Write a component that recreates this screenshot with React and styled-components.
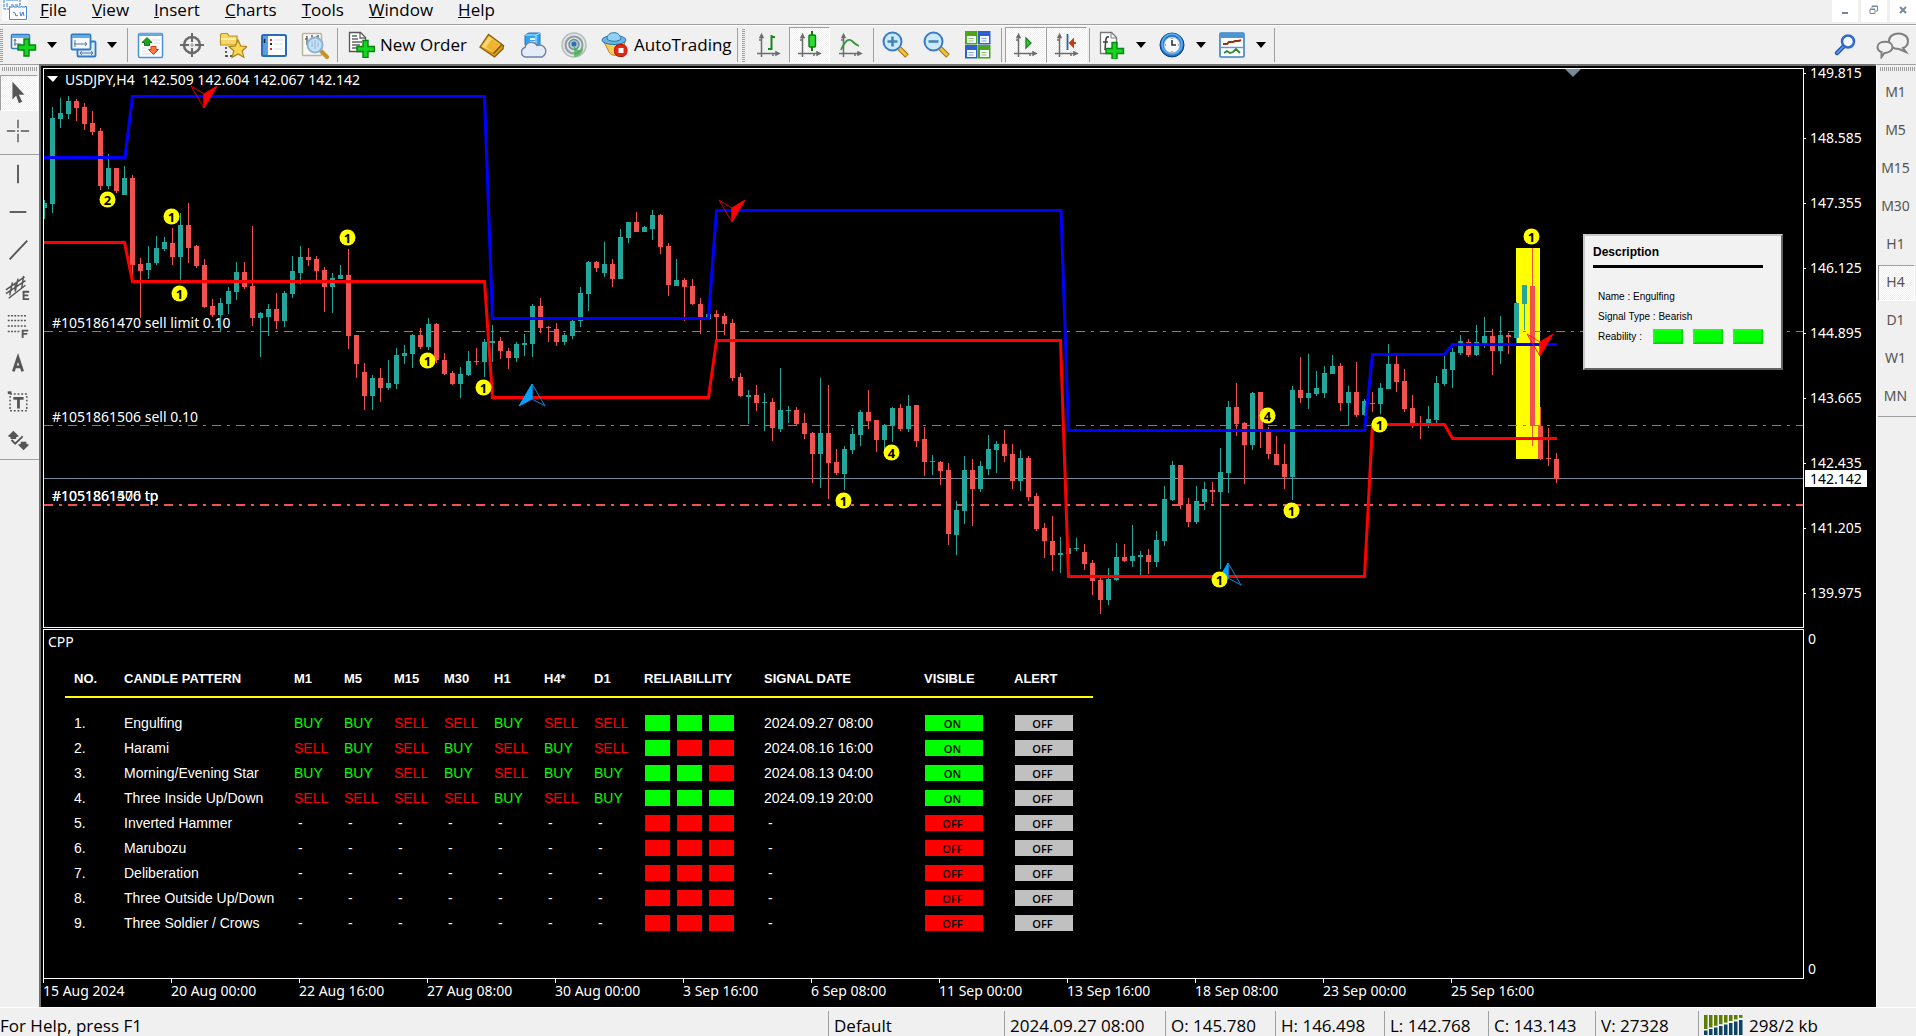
import React from 'react';
import styled, { createGlobalStyle } from 'styled-components';

const colors = {
  face: '#f0f0f0',
  line: '#a0a0a0',
  up: '#26a69a',
  down: '#ef5350',
  green: '#00ff00',
  red: '#ff0000',
  blue: '#0000ff',
  yellow: '#ffff00',
  slate: '#778899',
};

const uiFont = '"Open Sans", "Noto Sans", sans-serif';
const chartFont = '"Noto Sans", "Open Sans", sans-serif';
const tableFont = '"Liberation Sans", Arial, sans-serif';

const GlobalStyle = createGlobalStyle`
  * {
    box-sizing: border-box;
  }

  body {
    margin: 0;
    background: ${colors.face};
    font-family: ${uiFont};
    font-size: 17px;
    color: #000;
  }

  button {
    margin: 0;
    padding: 0;
    border: 0;
    background: none;
    color: inherit;
    font: inherit;
  }
`;

/* ---------- data ---------- */

const menus = ['File', 'View', 'Insert', 'Charts', 'Tools', 'Window', 'Help'];

const timeframes = ['M1', 'M5', 'M15', 'M30', 'H1', 'H4', 'D1', 'W1', 'MN'];

const prices = ['149.815', '148.585', '147.355', '146.125', '144.895', '143.665', '142.435', '141.205', '139.975'];

const times = [
  '15 Aug 2024', '20 Aug 00:00', '22 Aug 16:00', '27 Aug 08:00', '30 Aug 00:00', '3 Sep 16:00',
  '6 Sep 08:00', '11 Sep 00:00', '13 Sep 16:00', '18 Sep 08:00', '23 Sep 00:00', '25 Sep 16:00',
];

const frames = ['M1', 'M5', 'M15', 'M30', 'H1', 'H4*', 'D1'];

// signals: B = buy, S = sell. score: how many of the three blocks are green
const patterns = [
  { name: 'Engulfing', signals: 'BBSSBSS', score: 3, date: '2024.09.27 08:00' },
  { name: 'Harami', signals: 'SBSBSBS', score: 1, date: '2024.08.16 16:00' },
  { name: 'Morning/Evening Star', signals: 'BBSBSBB', score: 2, date: '2024.08.13 04:00' },
  { name: 'Three Inside Up/Down', signals: 'SSSSBSB', score: 3, date: '2024.09.19 20:00' },
  { name: 'Inverted Hammer', signals: '-------', score: 0 },
  { name: 'Marubozu', signals: '-------', score: 0 },
  { name: 'Deliberation', signals: '-------', score: 0 },
  { name: 'Three Outside Up/Down', signals: '-------', score: 0 },
  { name: 'Three Soldier / Crows', signals: '-------', score: 0 },
];

// [rising, high, body top, body bottom, low], one every 8px
const candles = [
  [1, 200, 203, 208, 219], [1, 107, 118, 204, 213], [1, 98, 113, 119, 128], [1, 96, 101, 114, 119],
  [0, 99, 101, 108, 121], [0, 103, 107, 124, 130], [0, 111, 123, 132, 135], [0, 128, 131, 186, 190],
  [1, 154, 168, 186, 189], [0, 168, 168, 191, 193], [1, 166, 178, 195, 195], [0, 175, 178, 265, 280],
  [0, 258, 264, 271, 318], [1, 246, 263, 270, 279], [1, 236, 248, 263, 265], [1, 237, 242, 249, 251],
  [0, 228, 243, 257, 265], [1, 213, 225, 257, 280], [0, 203, 225, 248, 263], [0, 245, 246, 266, 268],
  [0, 259, 265, 307, 308], [0, 299, 306, 315, 317], [1, 298, 303, 315, 331], [1, 287, 291, 304, 314],
  [1, 262, 272, 292, 300], [0, 262, 272, 287, 289], [0, 226, 286, 318, 326], [1, 312, 313, 318, 357],
  [1, 304, 309, 317, 336], [0, 293, 309, 321, 329], [1, 291, 293, 321, 327], [1, 256, 271, 294, 298],
  [1, 246, 257, 273, 284], [0, 248, 257, 260, 266], [0, 256, 259, 271, 282], [0, 267, 270, 287, 312],
  [1, 273, 278, 287, 313], [1, 265, 275, 279, 279], [0, 249, 275, 336, 349], [0, 335, 335, 364, 378],
  [0, 363, 372, 396, 410], [1, 375, 378, 396, 410], [0, 368, 378, 388, 402], [1, 360, 383, 388, 390],
  [1, 348, 355, 384, 389], [1, 345, 353, 356, 364], [1, 334, 335, 354, 368], [0, 328, 335, 347, 349],
  [1, 318, 324, 347, 350], [0, 323, 324, 360, 363], [0, 353, 360, 374, 375], [0, 371, 373, 384, 385],
  [1, 367, 374, 384, 398], [1, 351, 361, 375, 376], [0, 348, 361, 362, 365], [1, 339, 342, 362, 377],
  [1, 325, 341, 343, 362], [0, 337, 341, 351, 359], [0, 348, 351, 358, 369], [1, 342, 344, 358, 362],
  [1, 334, 343, 345, 356], [1, 304, 306, 344, 357], [0, 298, 306, 328, 333], [0, 326, 327, 328, 342],
  [0, 323, 329, 342, 346], [1, 333, 335, 342, 345], [1, 320, 321, 336, 339], [1, 287, 293, 321, 327],
  [1, 261, 262, 294, 311], [0, 261, 262, 268, 272], [1, 242, 264, 273, 277], [0, 259, 264, 279, 287],
  [1, 229, 237, 279, 279], [1, 222, 222, 238, 243], [0, 212, 222, 232, 232], [1, 226, 227, 232, 232],
  [1, 210, 215, 229, 240], [0, 214, 215, 247, 254], [0, 243, 246, 285, 296], [1, 259, 280, 286, 286],
  [0, 278, 280, 287, 321], [0, 279, 286, 304, 305], [0, 298, 304, 318, 334], [1, 314, 314, 319, 319],
  [0, 310, 314, 317, 340], [0, 313, 316, 324, 335], [0, 319, 323, 378, 381], [0, 373, 377, 396, 397],
  [1, 390, 395, 397, 424], [0, 385, 395, 403, 411], [1, 393, 402, 403, 431], [0, 398, 402, 428, 441],
  [1, 368, 410, 429, 432], [1, 406, 410, 411, 423], [0, 407, 410, 424, 425], [0, 413, 423, 434, 439],
  [0, 432, 433, 454, 483], [1, 378, 433, 454, 488], [0, 385, 433, 463, 499], [0, 449, 462, 473, 475],
  [1, 446, 449, 474, 490], [1, 428, 434, 450, 454], [1, 410, 412, 435, 446], [0, 390, 412, 421, 429],
  [0, 420, 420, 440, 452], [1, 424, 425, 440, 450], [1, 407, 408, 426, 442], [0, 404, 408, 429, 431],
  [1, 395, 406, 429, 432], [0, 405, 405, 441, 447], [0, 427, 439, 462, 476], [1, 455, 461, 462, 475],
  [0, 461, 462, 471, 485], [0, 463, 470, 534, 545], [1, 501, 510, 535, 555], [1, 456, 470, 511, 524],
  [0, 459, 470, 489, 526], [1, 461, 466, 489, 492], [1, 435, 449, 469, 475], [1, 441, 444, 450, 473],
  [0, 430, 444, 456, 462], [0, 444, 454, 481, 489], [1, 450, 458, 481, 491], [0, 456, 458, 497, 501],
  [0, 493, 496, 529, 531], [0, 523, 528, 541, 558], [0, 516, 541, 555, 571], [1, 537, 553, 555, 573],
  [1, 548, 548, 554, 554], [1, 538, 548, 549, 551], [0, 544, 552, 564, 570], [0, 560, 563, 581, 595],
  [0, 578, 580, 600, 614], [1, 568, 579, 600, 605], [1, 543, 557, 580, 581], [0, 544, 557, 561, 562],
  [1, 525, 556, 561, 567], [1, 551, 555, 557, 576], [0, 549, 555, 562, 574], [1, 531, 540, 562, 567],
  [1, 486, 499, 541, 546], [1, 461, 465, 500, 501], [0, 465, 465, 505, 509], [0, 498, 504, 522, 527],
  [1, 486, 501, 522, 524], [1, 482, 489, 502, 510], [0, 482, 490, 492, 503], [1, 448, 472, 492, 569],
  [1, 401, 407, 473, 493], [0, 383, 407, 424, 436], [0, 422, 423, 445, 484], [1, 392, 393, 445, 450],
  [0, 392, 392, 430, 448], [0, 427, 430, 454, 459], [0, 436, 454, 465, 465], [0, 444, 464, 477, 489],
  [1, 386, 390, 477, 500], [0, 357, 390, 398, 403], [1, 354, 393, 398, 409], [1, 371, 388, 394, 396],
  [1, 366, 373, 393, 398], [1, 355, 366, 374, 374], [0, 363, 366, 403, 411], [1, 386, 392, 403, 426],
  [0, 362, 392, 415, 417], [1, 399, 401, 415, 416], [0, 392, 403, 404, 412], [1, 383, 388, 404, 414],
  [1, 344, 364, 389, 389], [0, 356, 364, 382, 392], [0, 369, 381, 409, 412], [0, 395, 408, 424, 428],
  [0, 416, 424, 425, 439], [1, 406, 419, 424, 428], [1, 376, 383, 420, 424], [1, 355, 369, 384, 386],
  [1, 348, 352, 370, 388], [1, 335, 341, 353, 355], [0, 339, 342, 355, 357], [1, 325, 342, 355, 356],
  [1, 317, 336, 344, 348], [0, 329, 336, 351, 375], [1, 316, 335, 351, 364], [0, 333, 335, 337, 354],
  [1, 302, 303, 338, 343], [1, 285, 285, 304, 330], [0, 248, 286, 426, 446], [0, 407, 426, 459, 460],
  [0, 428, 458, 459, 466], [0, 453, 459, 479, 483],
];

const upperBand = '44,157.5 125,157.5 132.5,96.5 484.5,96.5 492.5,318.5 708.5,318.5 716.5,210.5 1061,210.5 1068.5,430.5 1364.5,430.5 1372.5,354.5 1444.5,354.5 1452.5,344.5 1557,344.5';
const lowerBand = '44,242.5 124.5,242.5 132.5,281.5 484.5,281.5 492.5,397.5 708.5,397.5 716.5,340.5 1060.5,340.5 1068.5,576.5 1364.5,576.5 1372.5,424.5 1444.5,424.5 1452.5,438.5 1557,438.5';

const markers = [
  [107.5, 199.5, 2], [171.5, 216.5, 1], [179.5, 293.5, 1], [347.5, 237.5, 1], [427.5, 360.5, 1],
  [483.5, 387.5, 1], [843.5, 500.5, 1], [891.5, 452.5, 4], [1219.5, 579.5, 1], [1291.5, 510.5, 1],
  [1267.5, 415.5, 4], [1379.5, 424.5, 1], [1531.5, 236.5, 1],
];

const status = [
  ['Default', 176], ['2024.09.27 08:00', 161], ['O: 145.780', 110], ['H: 146.498', 109],
  ['L: 142.768', 104], ['C: 143.143', 107], ['V: 27328', 103],
];

/* ---------- window ---------- */

const Window = styled.div`
  display: flex;
  flex-direction: column;
  min-height: 100vh;
`;

const MenuBar = styled.nav`
  display: flex;
  align-items: flex-start;
  height: 25px;
  padding-left: 2px;
  border-bottom: 1px solid ${colors.line};
`;

const MenuItem = styled.button`
  height: 20px;
  padding: 0 13px 0 12px;
  line-height: 18px;
`;

const WindowButtons = styled.div`
  display: flex;
  gap: 3px;
  margin-left: auto;
`;

const WindowButton = styled.button`
  display: flex;
  align-items: center;
  justify-content: center;
  width: 26px;
  height: 22px;
  padding-bottom: 2px;
  background: #fff;
`;

const Toolbar = styled.div`
  display: flex;
  align-items: center;
  height: 39px;
  border-top: 1px solid #fff;
`;

const Grip = styled.span`
  width: 3px;
  height: 33px;
  flex: none;
  margin-right: ${(p) => (p.$wide ? '3px' : '0')};
  margin-left: ${(p) => (p.$wide ? '4px' : '0')};
  background: repeating-linear-gradient(${colors.line} 0 1px, transparent 1px 2px);
`;

const Divider = styled.span`
  width: 1px;
  height: 34px;
  flex: none;
  margin: 0 ${(p) => p.$after ?? 2}px 0 ${(p) => p.$before ?? 2}px;
  background: ${colors.line};
`;

const pressed = `
  border: 1px solid ${colors.line};
  border-right-color: #fff;
  border-bottom-color: #fff;
  background: repeating-conic-gradient(#fff 0 25%, #f0f0f0 0 50%) 0 0 / 2px 2px;
`;

const ToolButton = styled.button`
  display: flex;
  align-items: center;
  justify-content: center;
  flex: none;
  gap: 5px;
  width: ${(p) => (p.$text ? 'auto' : '41px')};
  height: 36px;
  padding: ${(p) => (p.$text ? '0 4px 2px 7px' : '0')};
  ${(p) => p.$pressed && pressed}
`;

const DropArrow = styled.button`
  display: flex;
  align-items: center;
  justify-content: center;
  flex: none;
  width: 16px;
  height: 36px;
  margin-right: 3px;
`;

const ToolbarEnd = styled.div`
  display: flex;
  gap: 6px;
  margin-left: auto;
  padding-right: 3px;
`;

const Body = styled.div`
  display: flex;
  flex: 1;
`;

const SideBar = styled.aside`
  display: flex;
  flex-direction: column;
  flex: none;
  width: ${(p) => (p.$right ? '40px' : '39px')};
  padding-left: ${(p) => (p.$right ? '1px' : '0')};
  border-left: ${(p) => (p.$right ? '1px solid #fff' : '0')};
  border-top: 1px solid ${colors.line};
`;

const SideGrip = styled.span`
  height: 4px;
  margin: 2px 1px 3px 2px;
  background: repeating-linear-gradient(90deg, ${colors.line} 0 1px, transparent 1px 2px);
`;

const SideButton = styled.button`
  display: flex;
  align-items: center;
  justify-content: center;
  height: 36px;
  margin: 1px 1px 1px 0;
  padding: ${(p) => (p.$text ? '0 2px 3px 0' : '0 2px 0 0')};
  color: #555;
  font-family: ${chartFont};
  font-size: 14px;
  ${(p) => p.$pressed && pressed}
`;

const SideLine = styled.span`
  height: 1px;
  margin-top: ${(p) => p.$top ?? 0}px;
  background: ${colors.line};
`;

/* ---------- chart ---------- */

const Workspace = styled.main`
  display: grid;
  flex: 1;
  min-width: 0;
  grid-template-columns: minmax(0, 1fr) 72px;
  grid-template-rows: auto minmax(350px, 1fr) 27px;
  row-gap: 1px;
  padding: 2px 0 0 2px;
  border-left: 2px solid #707070;
  border-top: 2px solid #707070;
  background: #000;
  color: #fff;
  font-family: ${chartFont};
  font-size: 14px;
`;

const ChartPane = styled.section`
  position: relative;
  overflow: hidden;
  border: 1px solid #fff;
`;

const ChartSvg = styled.svg`
  display: block;
  width: 100%;
  height: 558px;
  font-family: ${chartFont};
  font-size: 14px;
`;

const PriceAxis = styled.div`
  position: relative;
  display: flex;
  flex-direction: column;
  gap: 55px;
`;

const Price = styled.span`
  display: flex;
  align-items: center;
  gap: 4px;
  height: 10px;
  line-height: 10px;

  &::before {
    content: '';
    width: 2px;
    height: 1px;
    background: #fff;
  }
`;

const CurrentPrice = styled.span`
  position: absolute;
  top: 402px;
  left: 1px;
  width: 62px;
  height: 17px;
  padding-left: 5px;
  background: #fff;
  color: #000;
  line-height: 17px;
`;

const DescriptionBox = styled.aside`
  position: absolute;
  top: 165px;
  right: 20px;
  width: 200px;
  height: 136px;
  padding: 9px 18px 0 8px;
  border: 2px solid;
  border-color: #c8c8c8 #646464 #646464 #c8c8c8;
  background: #f2f2f2;
  color: #000;
  font-family: ${tableFont};
  font-size: 10px;
`;

const DescriptionTitle = styled.h2`
  margin: 0 0 18px;
  padding-bottom: 6px;
  border-bottom: 3px solid #000;
  font-size: 12px;
  line-height: 14px;
`;

const DescriptionRow = styled.p`
  display: flex;
  align-items: center;
  gap: 10px;
  height: 20px;
  margin: 0;
  padding-left: 5px;
`;

const ReliabilityLabel = styled.span`
  width: 45px;
  white-space: nowrap;
`;

const Bevel = styled.span`
  width: 30px;
  height: 15px;
  flex: none;
  border: 2px solid;
  border-color: #1aff1a #00d800 #00d800 #1aff1a;
  background: ${colors.green};
`;

/* ---------- indicator ---------- */

const IndicatorPane = styled.section`
  overflow: hidden;
  border: 1px solid #fff;
`;

const IndicatorName = styled.div`
  height: 24px;
  padding-left: 4px;
  line-height: 24px;
`;

const IndicatorAxis = styled.div`
  display: flex;
  flex-direction: column;
  justify-content: space-between;
  padding: 0 0 1px 4px;
  line-height: 19px;
`;

const PatternTable = styled.table`
  width: 1028px;
  margin: 6px 0 0 21px;
  border-collapse: collapse;
  table-layout: fixed;
  font-family: ${tableFont};
  font-size: 14px;
  text-align: left;

  thead {
    border-bottom: 2px solid ${colors.yellow};
  }

  tbody::before {
    content: '';
    display: block;
    height: 12px;
  }
`;

const Head = styled.th`
  width: ${(p) => p.$width}px;
  height: 37px;
  padding: 0 0 0 ${(p) => p.$indent ?? 0}px;
  font-size: 13px;
`;

const Cell = styled.td`
  height: 25px;
  padding: 0 0 0 ${(p) => p.$indent ?? 0}px;
  color: ${(p) => p.$color ?? '#fff'};
  line-height: 16px;
  white-space: nowrap;
`;

const Blocks = styled.div`
  display: flex;
  gap: 7px;
`;

const Block = styled.span`
  width: 25px;
  height: 16px;
  background: ${(p) => (p.$on ? colors.green : colors.red)};
`;

const Toggle = styled.button`
  display: block;
  width: 58px;
  height: 16px;
  padding-right: 3px;
  background: ${(p) => p.$color};
  color: #000;
  font-family: ${uiFont};
  font-size: 11px;
  font-weight: 600;
  line-height: 17px;
`;

const TimeAxis = styled.div`
  display: flex;
  grid-column: 1 / -1;
  overflow: hidden;
  margin-top: -1px;
`;

const Time = styled.span`
  width: 128px;
  flex: none;
  line-height: 16px;
  white-space: nowrap;

  &::before {
    content: '';
    display: block;
    width: 1px;
    height: 4px;
    background: #fff;
  }
`;

/* ---------- status bar ---------- */

const StatusBar = styled.footer`
  display: flex;
  height: 30px;
  border-top: 1px solid #fff;
  line-height: 36px;
  white-space: nowrap;
  overflow: hidden;
`;

const StatusHelp = styled.span`
  flex: 1;
`;

const StatusCell = styled.span`
  display: flex;
  flex: none;
  gap: 6px;
  width: ${(p) => p.$width}px;
  height: 26px;
  margin-top: 3px;
  padding-left: 5px;
  border-left: 1px solid ${colors.line};
  line-height: 30px;

  svg {
    margin-top: 4px;
  }
`;

/* ---------- icons ---------- */

function Icon({ children, size = 28 }) {
  return (
    <svg width={size} height={size} viewBox="0 0 28 28" fill="none" aria-hidden="true">
      {children}
    </svg>
  );
}

const Plus = ({ x, y }) => (
  <path
    transform={`translate(${x} ${y})`}
    d="M-3 -8.5h5v6h6.500v5h-6.500v6h-5v-6h-6v-5h6z"
    fill="#14d622"
    stroke="#08840f"
    strokeWidth="1.4"
  />
);

const Axes = () => (
  <path d="M7.500 5v21M3 22.500h20M7.500 3.500l-1.500 3h3zM25 22.500l-3 -1.500v3zM5 9h2M19 25v-2" stroke="#6c6c6c" strokeWidth="1.500" fill="#6c6c6c" />
);

const Caret = () => (
  <svg width="10" height="6" viewBox="0 0 10 6" aria-hidden="true">
    <path d="M0 0h10L5 6z" fill="#000" />
  </svg>
);

const LogoIcon = () => (
  <svg width="26" height="22" viewBox="0 0 26 22" aria-hidden="true">
    <path d="M0 0h26v21H0z" fill="#fbfbfb" />
    <path d="M2 0v9h7V5h9V0" fill="#fff" stroke="#3d74c8" strokeDasharray="3 1" />
    <path d="M4 0h12M5 3v4" stroke="#8fc0f4" strokeWidth="2" />
    <path d="M7.500 6.500h17v13h-17z" fill="#fff" stroke="#4a86dc" />
    <path d="M8 7h16" stroke="#8fc0f4" strokeWidth="2" strokeDasharray="3 1" />
    <path d="M11 12l2 1 1 3 2-1M18 12l1 4 2-4 1 4" stroke="#3d74e0" fill="none" />
  </svg>
);

const NewChartIcon = () => (
  <Icon>
    <rect x="1.500" y="3.500" width="18" height="14" rx="1" fill="#f3f9ff" stroke="#2f7cc4" strokeWidth="1.500" />
    <path d="M2 5.500h17" stroke="#64a8e6" strokeWidth="3" />
    <path d="M5 9v6M4 13h7M4 10l1-2 1 2" stroke="#5c7488" />
    <Plus x="17" y="16.500" />
  </Icon>
);

const ProfilesIcon = () => (
  <Icon>
    <rect x="7.500" y="10.500" width="18" height="15" rx="1" fill="#dcecfc" stroke="#2f7cc4" strokeWidth="1.800" />
    <rect x="1.500" y="3.500" width="19" height="15" rx="1" fill="#f3f9ff" stroke="#2f7cc4" strokeWidth="1.800" />
    <path d="M2 5.500h18" stroke="#64a8e6" strokeWidth="3" />
    <path d="M5 9v7M4 13h13M15 11l2 2-2 2M10 22h13M12 20l-2 2 2 2M21 20l2 2-2 2" stroke="#5c7488" />
  </Icon>
);

const MarketIcon = () => (
  <Icon>
    <rect x="1.500" y="2.500" width="24" height="24" rx="1.500" fill="#fff" stroke="#4a94dc" strokeWidth="1.500" />
    <path d="M2 3.500h23" stroke="#64a8e6" strokeWidth="3" />
    <path d="M5 17h4M5 20h6M15 9h8M17 12h6M5 23h8" stroke="#d4dce4" />
    <path d="M10 6.500l5 5h-2.500v3h-5v-3H5z" fill="#22a022" stroke="#127812" />
    <path d="M16.500 23.500l-5-5H14v-3h5v3h2.500z" fill="#ff7a3c" stroke="#d03c10" />
  </Icon>
);

const TargetIcon = () => (
  <Icon>
    <circle cx="14" cy="14" r="8" stroke="#6a6a6a" strokeWidth="2.500" />
    <path d="M14 2v9M14 17v9M2 14h9M17 14h9" stroke="#6a6a6a" strokeWidth="2" />
    <path d="M12 14h4M14 12v4" stroke="#999" />
  </Icon>
);

const FavoritesIcon = () => (
  <Icon>
    <path d="M1.500 14V4l1-1.500h6L10 5h8v9z" fill="#f6d766" stroke="#b8922a" strokeWidth="1.200" />
    <path d="M2 8h15" stroke="#fff0a8" strokeWidth="2" />
    <path d="M7 16v10M7 25h7" stroke="#333" strokeWidth="1.500" strokeDasharray="2 2" />
    <path d="M19 9l2.800 6 6.200.6-4.800 4.200 1.600 6.400L19 23l-5.800 3.200 1.600-6.400L10 15.600l6.200-.6z" fill="#fbd652" stroke="#a8801c" strokeWidth="1.200" />
  </Icon>
);

const NavigatorIcon = () => (
  <Icon>
    <rect x="2" y="4" width="24" height="21" rx="1.500" fill="#fff" stroke="#2a6cb8" strokeWidth="2" />
    <path d="M3 5h5v19H3z" fill="#5a9ee0" />
    <path d="M4.500 8v4" stroke="#123" strokeWidth="1.500" />
    <path d="M10 9h2M10 18h2" stroke="#e03030" strokeWidth="2" />
    <path d="M10 13h2" stroke="#222" strokeWidth="2" />
    <path d="M14 9h9M14 13h9M14 18h9" stroke="#cfe0f4" />
  </Icon>
);

const TesterIcon = () => (
  <Icon>
    <rect x="1.500" y="2.500" width="19" height="22" rx="1" fill="#faf8f0" stroke="#b8b4a4" strokeWidth="1.500" />
    <path d="M6 5v9M4 8h2M11 4v7M13 7h-2M17 4v8M15 6h2" stroke="#666" strokeWidth="1.500" />
    <path d="M20 20l6 6" stroke="#c8922a" strokeWidth="4" strokeLinecap="round" />
    <circle cx="14" cy="14" r="7.500" fill="#c2e0fa" fillOpacity="0.9" stroke="#86b4dc" strokeWidth="2" />
    <path d="M11 16v-5M14 18V9M17 16v-4" stroke="#8fb0d0" />
  </Icon>
);

const NewOrderIcon = () => (
  <Icon>
    <path d="M2.500 2.500h11l5 5v14h-16z" fill="#fff" stroke="#555" strokeWidth="1.300" />
    <path d="M13 3v5h5M5 6h5M5 9h6M5 12h10M5 15h8M5 18h5" stroke="#666" strokeWidth="1.300" />
    <Plus x="19" y="19" />
  </Icon>
);

const EditorIcon = () => (
  <Icon>
    <path d="M2 16L10.500 3.500 25.500 14.500 25 18l-8.500 8z" fill="#dc9c18" stroke="#8c5c0c" strokeWidth="1.300" />
    <path d="M3.500 15.500L11 5l11.500 8.500-7 8z" fill="#f9d66c" />
    <path d="M8 16l6-8 8 5.500-6.500 8z" fill="#eeb430" />
    <path d="M15.500 22.500l8-8.500" stroke="#7c5408" strokeWidth="1.300" />
  </Icon>
);

const CloudIcon = () => (
  <Icon>
    <path d="M6 4l4-2h11v12H6z" fill="#2fa4f4" stroke="#1878c4" />
    <path d="M6 4h11v12M17 4l4-2" stroke="#bfe4ff" />
    <path d="M11 8h5M11 11h5" stroke="#e8f6ff" strokeWidth="2" />
    <path d="M6 26a5 5 0 010-9.500 6.500 6.500 0 0112-2 6 6 0 015 11.500z" fill="#e6ecf6" stroke="#6c80a8" strokeWidth="1.400" />
  </Icon>
);

const SignalIcon = () => (
  <Icon>
    <circle cx="14" cy="14" r="12" fill="#e0e4e4" stroke="#b4bcbc" strokeWidth="1.500" />
    <circle cx="14" cy="14" r="8.500" stroke="#8c9ca0" strokeWidth="2" />
    <circle cx="14" cy="13.500" r="5" fill="#b4c8cc" stroke="#70909c" strokeWidth="1.500" />
    <circle cx="14" cy="13" r="2.500" fill="#2c6cb8" />
    <path d="M14 15v11c6-1 9-4 9-9-2 3-6 3-9-2z" fill="#48b050" fillOpacity="0.8" />
  </Icon>
);

const AutoTradingIcon = () => (
  <Icon>
    <path d="M3 12c4 3 16 3 21-1l-2 11c-3 4-11 5-14 0z" fill="#f8cc50" stroke="#b8842c" />
    <ellipse cx="13" cy="10" rx="12" ry="4.500" fill="#6cb4e4" stroke="#2878b0" />
    <path d="M6 9c0-8 13-9 14 0-3 3-11 3-14 0z" fill="#94d0f4" stroke="#2878b0" />
    <rect x="13.500" y="14.500" width="12.500" height="12" rx="5" fill="#e62810" stroke="#a81404" />
    <path d="M17.500 18h5v5h-5z" fill="#fff" />
  </Icon>
);

const BarsIcon = () => (
  <Icon>
    <Axes />
    <path d="M14 18h3.500V6H21M17.500 4v15" stroke="#168a1a" strokeWidth="2" />
  </Icon>
);

const CandleIcon = () => (
  <Icon>
    <Axes />
    <path d="M17 0v20" stroke="#0c7c10" strokeWidth="2" />
    <rect x="14" y="4" width="6.500" height="12" rx="1" fill="#2cdc34" stroke="#0c7c10" strokeWidth="1.400" />
  </Icon>
);

const LineIcon = () => (
  <Icon>
    <Axes />
    <path d="M5 19c4-9 7-12 11-9 3 3 4 4 7 5" stroke="#3a943c" strokeWidth="1.800" />
  </Icon>
);

const ZoomIcon = ({ plus }) => (
  <Icon>
    <path d="M17 17l8 8" stroke="#9c6c10" strokeWidth="5" />
    <path d="M17 17l7.500 7.500" stroke="#f4c438" strokeWidth="3" />
    <circle cx="10.500" cy="10.500" r="9" fill="#cdeafc" stroke="#3a7cc4" strokeWidth="2" />
    <path d={plus ? 'M5.500 10.500h10M10.500 5.500v10' : 'M5.500 10.500h10'} stroke="#4484b8" strokeWidth="2.600" />
  </Icon>
);

const TileIcon = () => (
  <Icon>
    {[[1, 0, '#4ca41c'], [14, 0, '#3060d0'], [1, 14, '#3060d0'], [14, 14, '#4ca41c']].map(([x, y, fill]) => (
      <g key={`${x}${y}`}>
        <rect x={x} y={y} width="12.500" height="13.500" fill={fill} />
        <path d={`M${x + 2} ${y + 5}h9v7h-9z`} fill="#f4fbff" />
        <path d={`M${x + 3.5} ${y + 7.5}h5M${x + 3.5} ${y + 10}h5`} stroke={fill} strokeOpacity="0.6" />
      </g>
    ))}
  </Icon>
);

const ScrollIcon = () => (
  <Icon>
    <Axes />
    <path d="M15 7l5 5-5 5z" fill="#38c83c" stroke="#148418" strokeWidth="1.300" />
  </Icon>
);

const ShiftIcon = () => (
  <Icon>
    <Axes />
    <path d="M15.500 3v16" stroke="#286898" strokeWidth="1.800" />
    <path d="M24 12h-5M21 9l-3 3 3 3z" stroke="#c03c14" strokeWidth="2" fill="#c03c14" />
  </Icon>
);

const IndicatorIcon = () => (
  <Icon>
    <path d="M2.500 1.500h11l5 5v16h-16z" fill="#fff" stroke="#777" strokeWidth="1.300" />
    <path d="M13 2v5h5" stroke="#777" />
    <path d="M11 6c-4-1-3 3-4 13M5 11h5" stroke="#444" strokeWidth="1.600" />
    <Plus x="17" y="20" />
  </Icon>
);

const ClockIcon = () => (
  <Icon>
    <circle cx="14" cy="14" r="12" fill="#1f74cc" stroke="#0c3c78" />
    <circle cx="14" cy="13" r="10" stroke="#5cb0f8" strokeWidth="1.500" />
    <circle cx="14" cy="14" r="8" fill="#f4f8fc" stroke="#9cb4cc" />
    <path d="M14 9v5h4" stroke="#333" strokeWidth="1.600" />
    <path d="M14 7v1M14 20v1M7 14h1M20 14h1" stroke="#666" />
  </Icon>
);

const TemplateIcon = () => (
  <Icon>
    <rect x="2" y="2" width="24" height="24" rx="1" fill="#fff" stroke="#3c80c0" strokeWidth="1.600" />
    <path d="M2.500 4.500h23" stroke="#4c94d4" strokeWidth="5" />
    <path d="M3 16.500h22" stroke="#5c9cd4" strokeWidth="1.500" />
    <path d="M5 13h4l2-2h4l2-1h4l2-1" stroke="#983014" strokeWidth="2" />
    <path d="M6 22l3-2 3 2 3-1 3-3 4 4" stroke="#2c8430" strokeWidth="1.800" />
  </Icon>
);

const SearchIcon = () => (
  <Icon>
    <path d="M12 15l-7 7" stroke="#1c4cb4" strokeWidth="4.500" strokeLinecap="round" />
    <path d="M12 15l-7 7" stroke="#5c94ec" strokeWidth="2" strokeLinecap="round" />
    <circle cx="16" cy="10.500" r="6" fill="#f4f8ff" stroke="#3468d0" strokeWidth="2.500" />
  </Icon>
);

const ChatIcon = () => (
  <svg width="34" height="28" viewBox="0 0 34 28" fill="#f2f2f2" stroke="#808080" strokeWidth="2" aria-hidden="true">
    <path d="M13 10c0-10 19-10 19 0 0 4-2 6-5 7l3 4-7-3c-6 0-10-3-10-8z" />
    <path d="M1.500 16c0-7 15-7 15 0 0 4-5 6-8 6l-3 4v-5c-3-1-4-2-4-5z" />
  </svg>
);

const drawTools = [
  ['Cursor', <path key="i" d="M8 2v19l4-4 3 8 3.500-1.500L15 16h6z" fill="#555" />],
  ['Crosshair', <path key="i" d="M14 2v9M14 17v9M2 14h9M17 14h9M13 14h2" stroke="#555" strokeWidth="1.500" />],
  ['Vertical line', <path key="i" d="M14 4v20" stroke="#555" strokeWidth="2" />],
  ['Horizontal line', <path key="i" d="M5 14h18" stroke="#555" strokeWidth="2" />],
  ['Trendline', <path key="i" d="M5 24L24 4" stroke="#555" strokeWidth="2" />],
  ['Channel', (
    <g key="i" stroke="#555" strokeWidth="1.600">
      <path d="M1 16L21 2M4 25L22 11M1 20l21-14M8 8L5 22M14 4l-3 14M20 1l-2 13M11 10v7" />
      <path d="M26 18h-6v8h6M20 22h5" strokeWidth="2" />
    </g>
  )],
  ['Fibonacci', (
    <g key="i" stroke="#555" strokeWidth="1.600">
      <path d="M3 3h21M3 8h21M3 14h21M3 20h14" strokeDasharray="2 1.500" />
      <path d="M25 19h-6v8M19 22.500h5" strokeWidth="2" />
    </g>
  )],
  ['Text', <path key="i" d="M9 22l5-15 5 15M11 17h6" stroke="#555" strokeWidth="3" />],
  ['Text label', (
    <g key="i" stroke="#555">
      <path d="M5.500 5.500h18v18h-18z" strokeWidth="1.600" strokeDasharray="2 2" />
      <path d="M9 10h11M14.500 10v11" strokeWidth="3" />
      <path d="M3 4h4" strokeWidth="3" />
    </g>
  )],
  ['Arrows', (
    <g key="i" fill="#555">
      <path d="M9 4l6 6-3 1v2H6v-2l-3-1zM20 25l-6-6 3-1v-2h6v2l3 1z" />
      <path d="M7 14l4 4 8-8" stroke="#555" strokeWidth="2" fill="none" />
    </g>
  )],
];

const signalBars = [0, 1, 2, 3, 4, 5, 6, 7];

const TrafficIcon = () => (
  <svg width="39" height="20" viewBox="0 0 39 20" aria-hidden="true">
    {signalBars.map((i) => (
      <g key={i}>
        <rect x={i * 5} y="0" width="3.500" height={14 - i * 1.6} fill="#5c7c08" />
        <rect x={i * 5} y={15.5 - i * 1.5} width="3.500" height={4.5 + i * 1.5} fill="#0c4464" />
      </g>
    ))}
  </svg>
);

/* ---------- chart parts ---------- */

function TrendArrow({ x, y, up }) {
  const color = up ? '#00a2ff' : colors.red;
  // the tip points away from the wings, one half filled and one outlined
  const filled = up ? 'M0 0L-13 22L0 15z' : 'M0 22L13 0L0 8z';
  const outlined = up ? 'M0 0L13 22L0 15z' : 'M0 22L-13 0L0 8z';
  return (
    <g transform={`translate(${x} ${y})`}>
      <path d={filled} fill={color} stroke={color} />
      <path d={outlined} fill="none" stroke={color} strokeOpacity="0.85" />
    </g>
  );
}

function Chart() {
  return (
    <ChartSvg role="img" aria-label="USDJPY H4 candlestick chart">
      <g transform="translate(-44 -69)">
        <path d="M1565 69h16l-8 8z" fill={colors.slate} />
        <rect x="1516" y="248" width="24" height="211" fill={colors.yellow} />
        <g shapeRendering="crispEdges">
          <path d="M44 331.500H9999M44 425.500H9999" stroke={colors.up} strokeDasharray="9 6 3 6" />
          <path d="M44 505H9999" stroke={colors.down} strokeWidth="2" strokeDasharray="9 6 3 6" />
          <path d="M44 478.500H9999" stroke={colors.slate} />
          {candles.map(([rising, high, top, bottom, low], i) => (
            <g key={i} fill={rising ? colors.up : colors.down}>
              <rect x={44 + i * 8} y={high} width="1" height={low - high} />
              <rect x={42 + i * 8} y={top} width="5" height={bottom - top} />
            </g>
          ))}
        </g>
        <polyline points={upperBand} fill="none" stroke={colors.blue} strokeWidth="3" />
        <polyline points={lowerBand} fill="none" stroke={colors.red} strokeWidth="3" />
        <TrendArrow x={204} y={86} />
        <TrendArrow x={732} y={200} />
        <TrendArrow x={1540} y={334} />
        <TrendArrow x={532} y={384} up />
        <TrendArrow x={1228} y={563} up />
        {markers.map(([x, y, label]) => (
          <g key={x}>
            <circle cx={x} cy={y} r="8" fill={colors.yellow} />
            <text x={x} y={y + 5} fontSize="13" fontWeight="700" textAnchor="middle" fill="#000">{label}</text>
          </g>
        ))}
        <g fill="#fff">
          <path d="M47 76h11l-5 6z" />
          <text x="65" y="85" xmlSpace="preserve">USDJPY,H4  142.509 142.604 142.067 142.142</text>
          <text x="52" y="328">#1051861470 sell limit 0.10</text>
          <text x="52" y="422">#1051861506 sell 0.10</text>
          <text x="52" y="501">#1051861470 tp</text>
          <text x="52" y="501">#1051861506 tp</text>
        </g>
      </g>
    </ChartSvg>
  );
}

function Description() {
  return (
    <DescriptionBox>
      <DescriptionTitle>Description</DescriptionTitle>
      <DescriptionRow>Name : Engulfing</DescriptionRow>
      <DescriptionRow>Signal Type : Bearish</DescriptionRow>
      <DescriptionRow>
        <ReliabilityLabel>Reability :</ReliabilityLabel>
        <Bevel />
        <Bevel />
        <Bevel />
      </DescriptionRow>
    </DescriptionBox>
  );
}

function Signal({ value }) {
  if (value === 'B') return <Cell $color={colors.green}>BUY</Cell>;
  if (value === 'S') return <Cell $color={colors.red}>SELL</Cell>;
  return <Cell $indent={4}>-</Cell>;
}

function Patterns() {
  return (
    <PatternTable>
      <thead>
        <tr>
          <Head $width={59} $indent={9}>NO.</Head>
          <Head $width={170}>CANDLE PATTERN</Head>
          {frames.map((frame) => (
            <Head key={frame} $width={50}>{frame}</Head>
          ))}
          <Head $width={120}>RELIABILLITY</Head>
          <Head $width={160}>SIGNAL DATE</Head>
          <Head $width={90}>VISIBLE</Head>
          <Head $width={79}>ALERT</Head>
        </tr>
      </thead>
      <tbody>
        {patterns.map((pattern, index) => (
          <tr key={pattern.name}>
            <Cell $indent={9}>{index + 1}.</Cell>
            <Cell>{pattern.name}</Cell>
            {pattern.signals.split('').map((value, i) => (
              <Signal key={frames[i]} value={value} />
            ))}
            <Cell $indent={1}>
              <Blocks>
                {[0, 1, 2].map((i) => (
                  <Block key={i} $on={i < pattern.score} />
                ))}
              </Blocks>
            </Cell>
            <Cell $indent={pattern.date ? 0 : 4}>{pattern.date || '-'}</Cell>
            <Cell $indent={1}>
              <Toggle $color={pattern.date ? colors.green : colors.red}>{pattern.date ? 'ON' : 'OFF'}</Toggle>
            </Cell>
            <Cell $indent={1}>
              <Toggle $color="#c0c0c0">OFF</Toggle>
            </Cell>
          </tr>
        ))}
      </tbody>
    </PatternTable>
  );
}

function Tool({ label, icon, active, children }) {
  return (
    <ToolButton aria-label={label} $pressed={active} $text={Boolean(children)}>
      {icon}
      {children}
    </ToolButton>
  );
}

function DropTool({ label, icon }) {
  return (
    <>
      <Tool label={label} icon={icon} />
      <DropArrow aria-label={`${label} options`}><Caret /></DropArrow>
    </>
  );
}

function App() {
  return (
    <Window>
      <GlobalStyle />
      <MenuBar>
        <LogoIcon />
        {menus.map((menu) => (
          <MenuItem key={menu}><u>{menu[0]}</u>{menu.slice(1)}</MenuItem>
        ))}
        <WindowButtons>
          <WindowButton aria-label="Minimize">
            <svg width="10" height="10"><path d="M2 8h6" stroke={colors.slate} strokeWidth="2" /></svg>
          </WindowButton>
          <WindowButton aria-label="Restore">
            <svg width="10" height="10" fill="none" stroke={colors.slate}>
              <path d="M1 4.500h5v4H1zM1 4h5M3 3V1.500h5.500V6H7M3 1h6" />
            </svg>
          </WindowButton>
          <WindowButton aria-label="Close">
            <svg width="10" height="10"><path d="M2 2l6 6M8 2L2 8" stroke={colors.slate} strokeWidth="2" /></svg>
          </WindowButton>
        </WindowButtons>
      </MenuBar>

      <Toolbar>
        <Grip />
        <DropTool label="New chart" icon={<NewChartIcon />} />
        <DropTool label="Profiles" icon={<ProfilesIcon />} />
        <Divider $before={4} />
        <Tool label="Market watch" icon={<MarketIcon />} />
        <Tool label="Data window" icon={<TargetIcon />} />
        <Tool label="Navigator" icon={<FavoritesIcon />} />
        <Tool label="Terminal" icon={<NavigatorIcon />} />
        <Tool label="Strategy tester" icon={<TesterIcon />} />
        <Divider />
        <Tool icon={<NewOrderIcon />}>New Order</Tool>
        <Tool label="MetaEditor" icon={<EditorIcon />} />
        <Tool label="Hosting" icon={<CloudIcon />} />
        <Tool label="Signals" icon={<SignalIcon />} />
        <Tool icon={<AutoTradingIcon />}>AutoTrading</Tool>
        <Divider $before={1} $after={0} />
        <Grip $wide />
        <Tool label="Bar chart" icon={<BarsIcon />} />
        <Tool label="Candlesticks" icon={<CandleIcon />} active />
        <Tool label="Line chart" icon={<LineIcon />} />
        <Divider />
        <Tool label="Zoom in" icon={<ZoomIcon plus />} />
        <Tool label="Zoom out" icon={<ZoomIcon />} />
        <Tool label="Tile windows" icon={<TileIcon />} />
        <Divider $after={3} />
        <Tool label="Auto scroll" icon={<ScrollIcon />} active />
        <Tool label="Chart shift" icon={<ShiftIcon />} active />
        <Divider />
        <DropTool label="Indicators" icon={<IndicatorIcon />} />
        <DropTool label="Periods" icon={<ClockIcon />} />
        <DropTool label="Templates" icon={<TemplateIcon />} />
        <Divider />
        <ToolbarEnd>
          <Tool label="Search" icon={<SearchIcon />} />
          <Tool label="Chat" icon={<ChatIcon />} />
        </ToolbarEnd>
      </Toolbar>

      <Body>
        <SideBar>
          <SideGrip />
          {drawTools.map(([label, icon], i) => (
            <React.Fragment key={label}>
              <SideButton aria-label={label} $pressed={i === 0}><Icon size={26}>{icon}</Icon></SideButton>
              {i === 1 && <SideLine $top={4} />}
            </React.Fragment>
          ))}
          <SideLine />
        </SideBar>

        <Workspace>
          <ChartPane>
            <Chart />
            <Description />
          </ChartPane>
          <PriceAxis>
            {prices.map((price) => (
              <Price key={price}>{price}</Price>
            ))}
            <CurrentPrice>142.142</CurrentPrice>
          </PriceAxis>
          <IndicatorPane>
            <IndicatorName>CPP</IndicatorName>
            <Patterns />
          </IndicatorPane>
          <IndicatorAxis>
            <span>0</span>
            <span>0</span>
          </IndicatorAxis>
          <TimeAxis>
            {times.map((time) => (
              <Time key={time}>{time}</Time>
            ))}
          </TimeAxis>
        </Workspace>

        <SideBar $right>
          <SideGrip />
          {timeframes.map((frame) => (
            <SideButton key={frame} $text $pressed={frame === 'H4'}>{frame}</SideButton>
          ))}
          <SideLine />
        </SideBar>
      </Body>

      <StatusBar>
        <StatusHelp>For Help, press F1</StatusHelp>
        {status.map(([text, width]) => (
          <StatusCell key={text} $width={width}>{text}</StatusCell>
        ))}
        <StatusCell $width={218}>
          <TrafficIcon />
          298/2 kb
        </StatusCell>
      </StatusBar>
    </Window>
  );
}

export default App;
